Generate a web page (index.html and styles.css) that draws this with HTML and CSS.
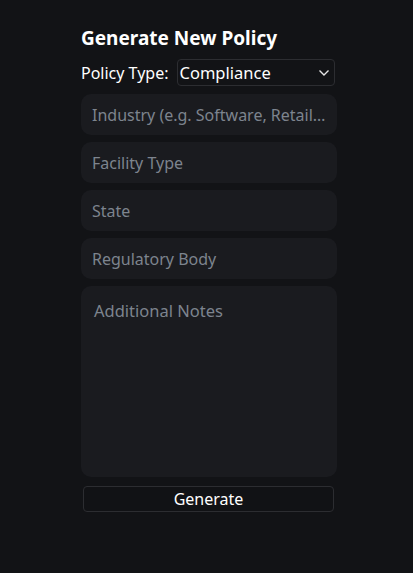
FILE: index.html
```html
<!DOCTYPE html>
<html>
<head>
<meta charset="utf-8">
<link rel="stylesheet" href="styles.css">
</head>
<body>
<div class="form">
  <h2 class="title">Generate New Policy</h2>
  <div class="type-row">
    <label class="type-label">Policy Type:</label>
    <div class="select">
      <span>Compliance</span>
      <svg width="12" height="8" viewBox="0 0 12 8"><path d="M1.5 1.5 L6 6 L10.5 1.5" fill="none" stroke="#e6e6e6" stroke-width="1.4"/></svg>
    </div>
  </div>
  <input class="field" placeholder="Industry (e.g. Software, Retail, Healthcare)">
  <input class="field" placeholder="Facility Type">
  <input class="field" placeholder="State">
  <input class="field" placeholder="Regulatory Body">
  <textarea class="notes" placeholder="Additional Notes"></textarea>
  <button class="btn">Generate</button>
</div>
</body>
</html>
```
FILE: styles.css
```css
html, body {
  margin: 0;
  background: #121316;
  font-family: "Noto Sans", "Open Sans", sans-serif;
}
.form {
  width: 256px;
  margin-left: 81px;
  padding-top: 25px;
  display: flex;
  flex-direction: column;
}
.title {
  margin: 0;
  color: #ffffff;
  font-size: 19px;
  font-weight: 700;
  line-height: 27px;
}
.type-row {
  display: flex;
  align-items: center;
  gap: 8px;
  margin-top: 7px;
}
.type-label {
  color: #ffffff;
  font-size: 16px;
}
.select {
  flex: 1;
  height: 27px;
  box-sizing: border-box;
  border: 1px solid #2c2d31;
  border-radius: 4px;
  margin-right: 2px;
  display: flex;
  align-items: center;
  justify-content: space-between;
  padding: 0 4px 0 2px;
  color: #ffffff;
  font-size: 16.5px;
}
.field {
  height: 41px;
  box-sizing: border-box;
  border: none;
  border-radius: 10px;
  background: #1a1b1f;
  padding: 0 11px;
  font-family: inherit;
  font-size: 16px;
  color: #ffffff;
  text-overflow: ellipsis;
  outline: none;
}
.field:first-of-type { margin-top: 8px; }
.field + .field { margin-top: 7px; }
.field::placeholder, .notes::placeholder {
  color: #7d848e;
}
.notes {
  margin-top: 7px;
  height: 191px;
  box-sizing: border-box;
  border: none;
  border-radius: 10px;
  background: #1a1b1f;
  padding: 13px 13px;
  font-family: inherit;
  font-size: 16.5px;
  color: #ffffff;
  resize: none;
  outline: none;
}
.btn {
  margin: 9px 3px 0 2px;
  height: 26px;
  border: 1px solid #2c2d31;
  border-radius: 4px;
  background: #111215;
  color: #ffffff;
  font-family: inherit;
  font-size: 16px;
  padding: 0;
}
```
